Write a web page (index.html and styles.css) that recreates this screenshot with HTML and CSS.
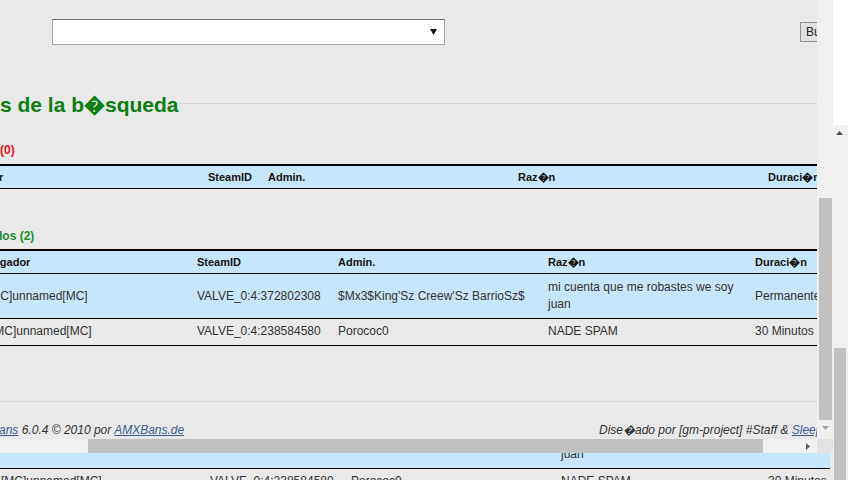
FILE: index.html
```html
<!doctype html>
<html lang="es">
<head>
<meta charset="utf-8">
<title>AMXBans - Buscar</title>
<link rel="stylesheet" href="styles.css">
</head>
<body>
<div class="screen">
  <div class="left">
    <div class="top">
      <div class="page">
        <form class="search">
          <div class="select">
            <svg width="7" height="6" viewBox="0 0 7 6"><path d="M0 0h7L3.5 6z" fill="#111"/></svg>
          </div>
          <button type="button">Buscar</button>
        </form>

        <div class="results">
          <h2 class="legend">s de la b&#xFFFD;squeda</h2>

          <div class="count red">(0)</div>
          <table class="bans t1">
            <colgroup><col class="c1"><col class="c2"><col class="c3"><col class="c4"><col class="c5"></colgroup>
            <tr><th class="first">Jugador</th><th>SteamID</th><th>Admin.</th><th>Raz&#xFFFD;n</th><th>Duraci&#xFFFD;n</th></tr>
          </table>

          <div class="count green">dos (2)</div>
          <table class="bans t2">
            <colgroup><col class="c1"><col class="c2"><col class="c3"><col class="c4"><col class="c5"></colgroup>
            <tr><th class="first">Jugador</th><th>SteamID</th><th>Admin.</th><th>Raz&#xFFFD;n</th><th>Duraci&#xFFFD;n</th></tr>
            <tr class="blue"><td class="first">[MC]unnamed[MC]</td><td>VALVE_0:4:372802308</td><td>$Mx3$King'Sz Creew'Sz BarrioSz$</td><td>mi cuenta que me robastes we soy juan</td><td>Permanente</td></tr>
            <tr class="grey"><td class="first">[MC]unnamed[MC]</td><td>VALVE_0:4:238584580</td><td>Porococ0</td><td>NADE SPAM</td><td>30 Minutos</td></tr>
          </table>
        </div>

        <div class="footer">
          <span class="first">AMX<a href="#">Bans</a> 6.0.4 &copy; 2010 por <a href="#">AMXBans.de</a></span>
          <span>Dise&#xFFFD;ado por [gm-project] #Staff &amp; <a href="#">Sleepwalker</a></span>
        </div>
      </div>
      <div class="vbar">
        <div class="thumb"></div>
        <svg class="arrow-down" width="7" height="4" viewBox="0 0 7 4"><path d="M0 0h7L3.5 4z" fill="#a3a3a3"/></svg>
      </div>
    </div>

    <div class="hbar">
      <div class="track-left"></div>
      <div class="thumb"></div>
      <div class="track-right">
        <svg width="4" height="7" viewBox="0 0 4 7"><path d="M0 0v7l4-3.5z" fill="#606060"/></svg>
      </div>
      <div class="corner"></div>
    </div>

    <div class="strip">
      <table class="bans echo">
        <colgroup><col class="c1"><col class="c2"><col class="c3"><col class="c4"><col class="c5"></colgroup>
        <tr class="blue"><td class="first">[MC]unnamed[MC]</td><td>VALVE_0:4:372802308</td><td>$Mx3$King'Sz Creew'Sz BarrioSz$</td><td>mi cuenta que me robastes we soy juan</td><td>Permanente</td></tr>
        <tr class="grey"><td class="first">[MC]unnamed[MC]</td><td>VALVE_0:4:238584580</td><td>Porococ0</td><td>NADE SPAM</td><td>30 Minutos</td></tr>
      </table>
    </div>
  </div>

  <div class="vbar2">
    <div class="white"></div>
    <svg class="arrow-up" width="7" height="4" viewBox="0 0 7 4"><path d="M0 4h7L3.5 0z" fill="#505050"/></svg>
    <div class="spacer"></div>
    <div class="thumb"></div>
  </div>
</div>
</body>
</html>
```

FILE: styles.css
```css
body {
  margin: 0;
  background: #e9e9e9;
  font: 12px/16px "Liberation Sans", Arial, sans-serif;
  color: #333;
}
.screen {
  display: flex;
  width: 848px;
  height: 480px;
  overflow: hidden;
}
.left {
  width: 833px;
  flex-shrink: 0;
  display: flex;
  flex-direction: column;
}
.top {
  display: flex;
  height: 439px;
  flex-shrink: 0;
}
.page {
  width: 817px;
  flex-shrink: 0;
  overflow: hidden;
}

/* search form */
.search {
  display: flex;
  align-items: center;
  padding-top: 19px;
  margin: 0;
}
.select {
  width: 393px;
  height: 26px;
  box-sizing: border-box;
  margin-left: 52px;
  flex-shrink: 0;
  background: #fff;
  border: 1px solid #a8a8a8;
  border-top-color: #707070;
  display: flex;
  justify-content: flex-end;
  align-items: center;
  padding-right: 7px;
}
.search button {
  margin-left: 355px;
  flex-shrink: 0;
  height: 20px;
  padding: 0 5px;
  border: 1px solid #8e8e8e;
  background: #e1e1e1;
  font: 12px "Liberation Sans", Arial, sans-serif;
  color: #222;
  white-space: nowrap;
}

/* results block */
.results {
  border-bottom: 1px solid #d4d4d4;
}
.legend {
  display: flex;
  align-items: center;
  margin: 48px 0 0;
  font: bold 21px/24px "Liberation Sans", Arial, sans-serif;
  color: #0b7f12;
  white-space: nowrap;
}
.legend::after {
  content: "";
  flex: 1;
  border-top: 1px solid #d4d4d4;
  margin-bottom: 4px;
}
.count {
  font-weight: bold;
  white-space: nowrap;
  overflow: hidden;
}
.count.red {
  color: #e0101b;
  margin-top: 25px;
  margin-bottom: 6px;
}
.count.green {
  color: #1f8a2a;
  margin-top: 39px;
  margin-bottom: 5px;
  text-indent: -5px;
}

.bans {
  border-collapse: collapse;
  table-layout: fixed;
}
.bans th {
  font: bold 11px/14px "Liberation Sans", Arial, sans-serif;
  color: #151515;
  text-align: left;
  padding: 4px 4px;
  background: #c6e6fb;
  border-top: 2px solid #000;
  border-bottom: 1px solid #000;
  white-space: nowrap;
  overflow: hidden;
}
.bans td {
  padding: 5px 4px;
  line-height: 17px;
  border-bottom: 1px solid #000;
  vertical-align: middle;
  white-space: nowrap;
  overflow: hidden;
}
.bans td:nth-child(4) {
  white-space: normal;
}
.bans tr.blue td {
  background: #c6e6fb;
}
.bans tr.grey td {
  padding: 4px 4px 5px;
}
.bans .first {
  padding-left: 0;
}

.t1 {
  width: 884px;
  margin-bottom: 39px;
}
.t1 .c1 { width: 204px; }
.t1 .c2 { width: 60px; }
.t1 .c3 { width: 250px; }
.t1 .c4 { width: 250px; }
.t1 .c5 { width: 120px; }
.t1 th.first { text-indent: -40px; }

.t2 {
  width: 871px;
  margin-bottom: 55px;
}
.t2 .c1 { width: 193px; }
.t2 .c2 { width: 141px; }
.t2 .c3 { width: 210px; }
.t2 .c4 { width: 207px; }
.t2 .c5 { width: 120px; }
.t2 .first { text-indent: -13px; }

/* footer */
.footer {
  display: grid;
  grid-template-columns: 599px auto;
  margin-top: 20px;
  font-style: italic;
  white-space: nowrap;
}
.footer .first {
  text-indent: -35px;
  overflow: hidden;
}
.footer a {
  color: #3d5d8e;
}

/* scrollbars */
.vbar {
  width: 16px;
  flex-shrink: 0;
  background: #f0f0f0;
  display: flex;
  flex-direction: column;
  padding-top: 198px;
  box-sizing: border-box;
}
.vbar .thumb {
  width: 13px;
  height: 222px;
  margin-left: 2px;
  background: #c1c1c1;
}
.arrow-down {
  margin: 6px 0 0 5px;
}
.hbar {
  display: flex;
  height: 14px;
  flex-shrink: 0;
}
.track-left {
  width: 88px;
  background: #f0f0f0;
}
.hbar .thumb {
  width: 675px;
  background: #c1c1c1;
}
.track-right {
  width: 54px;
  background: #f0f0f0;
  display: flex;
  align-items: center;
  justify-content: flex-end;
  padding-right: 7px;
  box-sizing: border-box;
}
.corner {
  width: 16px;
  background: #e2e2e2;
}

/* second copy of the rows, seen below the scrollbar */
.strip {
  width: 830px;
  height: 27px;
  overflow: hidden;
}
.echo {
  width: 884px;
  margin-top: -29px;
}
.echo .c1 { width: 206px; }
.echo .c2 { width: 141px; }
.echo .c3 { width: 210px; }
.echo .c4 { width: 207px; }
.echo .c5 { width: 120px; }
.echo .first { text-indent: -3px; }

.vbar2 {
  width: 15px;
  flex-shrink: 0;
  background: #f0f0f0;
  display: flex;
  flex-direction: column;
}
.vbar2 .white {
  height: 125px;
  background: #fff;
}
.arrow-up {
  margin: 6px 0 0 3px;
}
.spacer {
  flex: 1;
}
.vbar2 .thumb {
  height: 132px;
  width: 12px;
  margin-left: 1px;
  background: #c1c1c1;
}
```
